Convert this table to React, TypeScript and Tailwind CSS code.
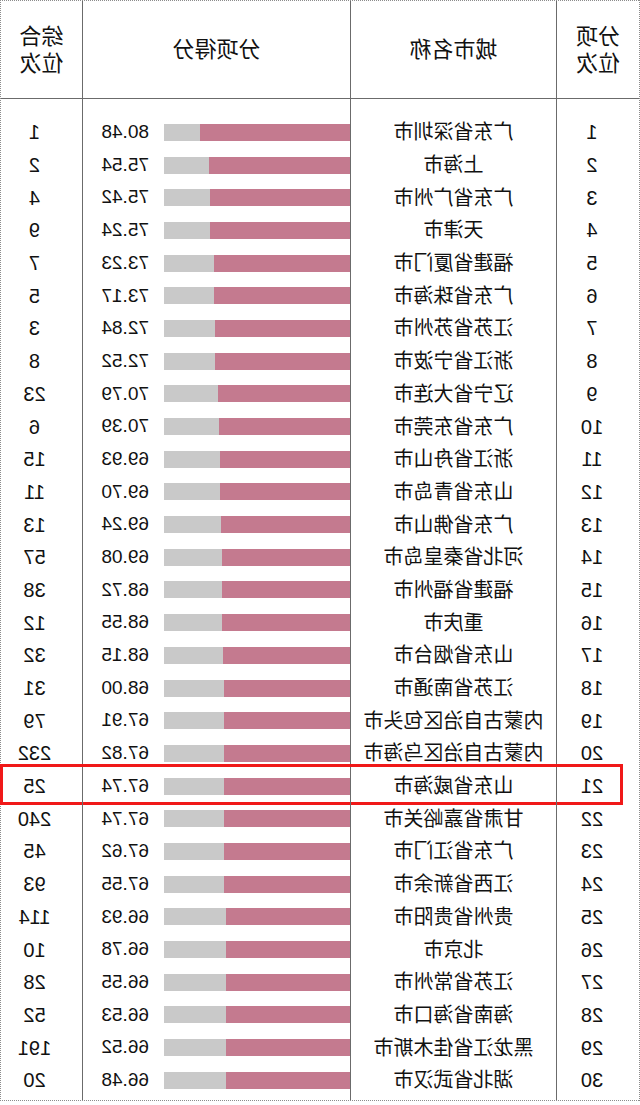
import React from "react";

type Row = { rank: number; city: string; score: number; overall: number };

const rows: Row[] = [
  { rank: 1, city: "广东省深圳市", score: 80.48, overall: 1 },
  { rank: 2, city: "上海市", score: 75.54, overall: 2 },
  { rank: 3, city: "广东省广州市", score: 75.42, overall: 4 },
  { rank: 4, city: "天津市", score: 75.24, overall: 9 },
  { rank: 5, city: "福建省厦门市", score: 73.23, overall: 7 },
  { rank: 6, city: "广东省珠海市", score: 73.17, overall: 5 },
  { rank: 7, city: "江苏省苏州市", score: 72.84, overall: 3 },
  { rank: 8, city: "浙江省宁波市", score: 72.52, overall: 8 },
  { rank: 9, city: "辽宁省大连市", score: 70.79, overall: 23 },
  { rank: 10, city: "广东省东莞市", score: 70.39, overall: 6 },
  { rank: 11, city: "浙江省舟山市", score: 69.93, overall: 15 },
  { rank: 12, city: "山东省青岛市", score: 69.7, overall: 11 },
  { rank: 13, city: "广东省佛山市", score: 69.24, overall: 13 },
  { rank: 14, city: "河北省秦皇岛市", score: 69.08, overall: 57 },
  { rank: 15, city: "福建省福州市", score: 68.72, overall: 38 },
  { rank: 16, city: "重庆市", score: 68.55, overall: 12 },
  { rank: 17, city: "山东省烟台市", score: 68.15, overall: 32 },
  { rank: 18, city: "江苏省南通市", score: 68.0, overall: 31 },
  { rank: 19, city: "内蒙古自治区包头市", score: 67.91, overall: 79 },
  { rank: 20, city: "内蒙古自治区乌海市", score: 67.82, overall: 232 },
  { rank: 21, city: "山东省威海市", score: 67.74, overall: 25 },
  { rank: 22, city: "甘肃省嘉峪关市", score: 67.74, overall: 240 },
  { rank: 23, city: "广东省江门市", score: 67.62, overall: 45 },
  { rank: 24, city: "江西省新余市", score: 67.55, overall: 93 },
  { rank: 25, city: "贵州省贵阳市", score: 66.93, overall: 114 },
  { rank: 26, city: "北京市", score: 66.78, overall: 10 },
  { rank: 27, city: "江苏省常州市", score: 66.55, overall: 28 },
  { rank: 28, city: "海南省海口市", score: 66.53, overall: 52 },
  { rank: 29, city: "黑龙江省佳木斯市", score: 66.52, overall: 191 },
  { rank: 30, city: "湖北省武汉市", score: 66.48, overall: 20 },
];

const cols = "grid grid-cols-[83px_206px_268px_81px]";
const line = "border-r border-[#6b6b6b]";

export default function App() {
  return (
    <div className="w-[640px] h-[1105px] bg-white text-[#111] font-['Liberation_Sans','Noto_Sans_CJK_SC',sans-serif]">
      {/* the source image is mirrored left-to-right */}
      <div className="-scale-x-100 w-[640px] border border-dotted border-[#8c8c8c]">
        {/* header */}
        <div className={`${cols} h-[98px] border-b border-[#6b6b6b] text-[22px] leading-[27px]`}>
          <div className={`${line} flex flex-col items-center justify-center`}>
            <span>分项</span>
            <span>位次</span>
          </div>
          <div className={`${line} flex items-center justify-center`}>城市名称</div>
          <div className={`${line} flex items-center justify-center`}>分项得分</div>
          <div className="flex flex-col items-center justify-center">
            <span>综合</span>
            <span>位次</span>
          </div>
        </div>

        {/* body */}
        <div className={`${cols} h-[17px]`}>
          <div className={line} />
          <div className={line} />
          <div className={line} />
          <div />
        </div>
        {rows.map((r) => (
          <div key={r.rank} className={`${cols} relative h-[32.7px] text-[20px]`}>
            <div className={`${line} flex items-center justify-center pl-[12px]`}>{r.rank}</div>
            <div className={`${line} flex items-center justify-center whitespace-nowrap`}>{r.city}</div>
            <div className={`${line} flex items-center`}>
              <div className="w-[186px] h-[17px] bg-[#c9c9c9]">
                <div className="h-full bg-[#c47a8f]" style={{ width: `${r.score}%` }} />
              </div>
              <span className="ml-[15px] text-[19px]">{r.score.toFixed(2)}</span>
            </div>
            <div className="flex items-center justify-center pl-[14px]">{r.overall}</div>
            {r.rank === 21 && (
              <div className="absolute left-[16px] -right-[1px] -top-[6px] -bottom-[3px] border-[3px] border-[#f01818] pointer-events-none" />
            )}
          </div>
        ))}
        <div className={`${cols} h-[3px]`}>
          <div className={line} />
          <div className={line} />
          <div className={line} />
          <div />
        </div>
      </div>
    </div>
  );
}
